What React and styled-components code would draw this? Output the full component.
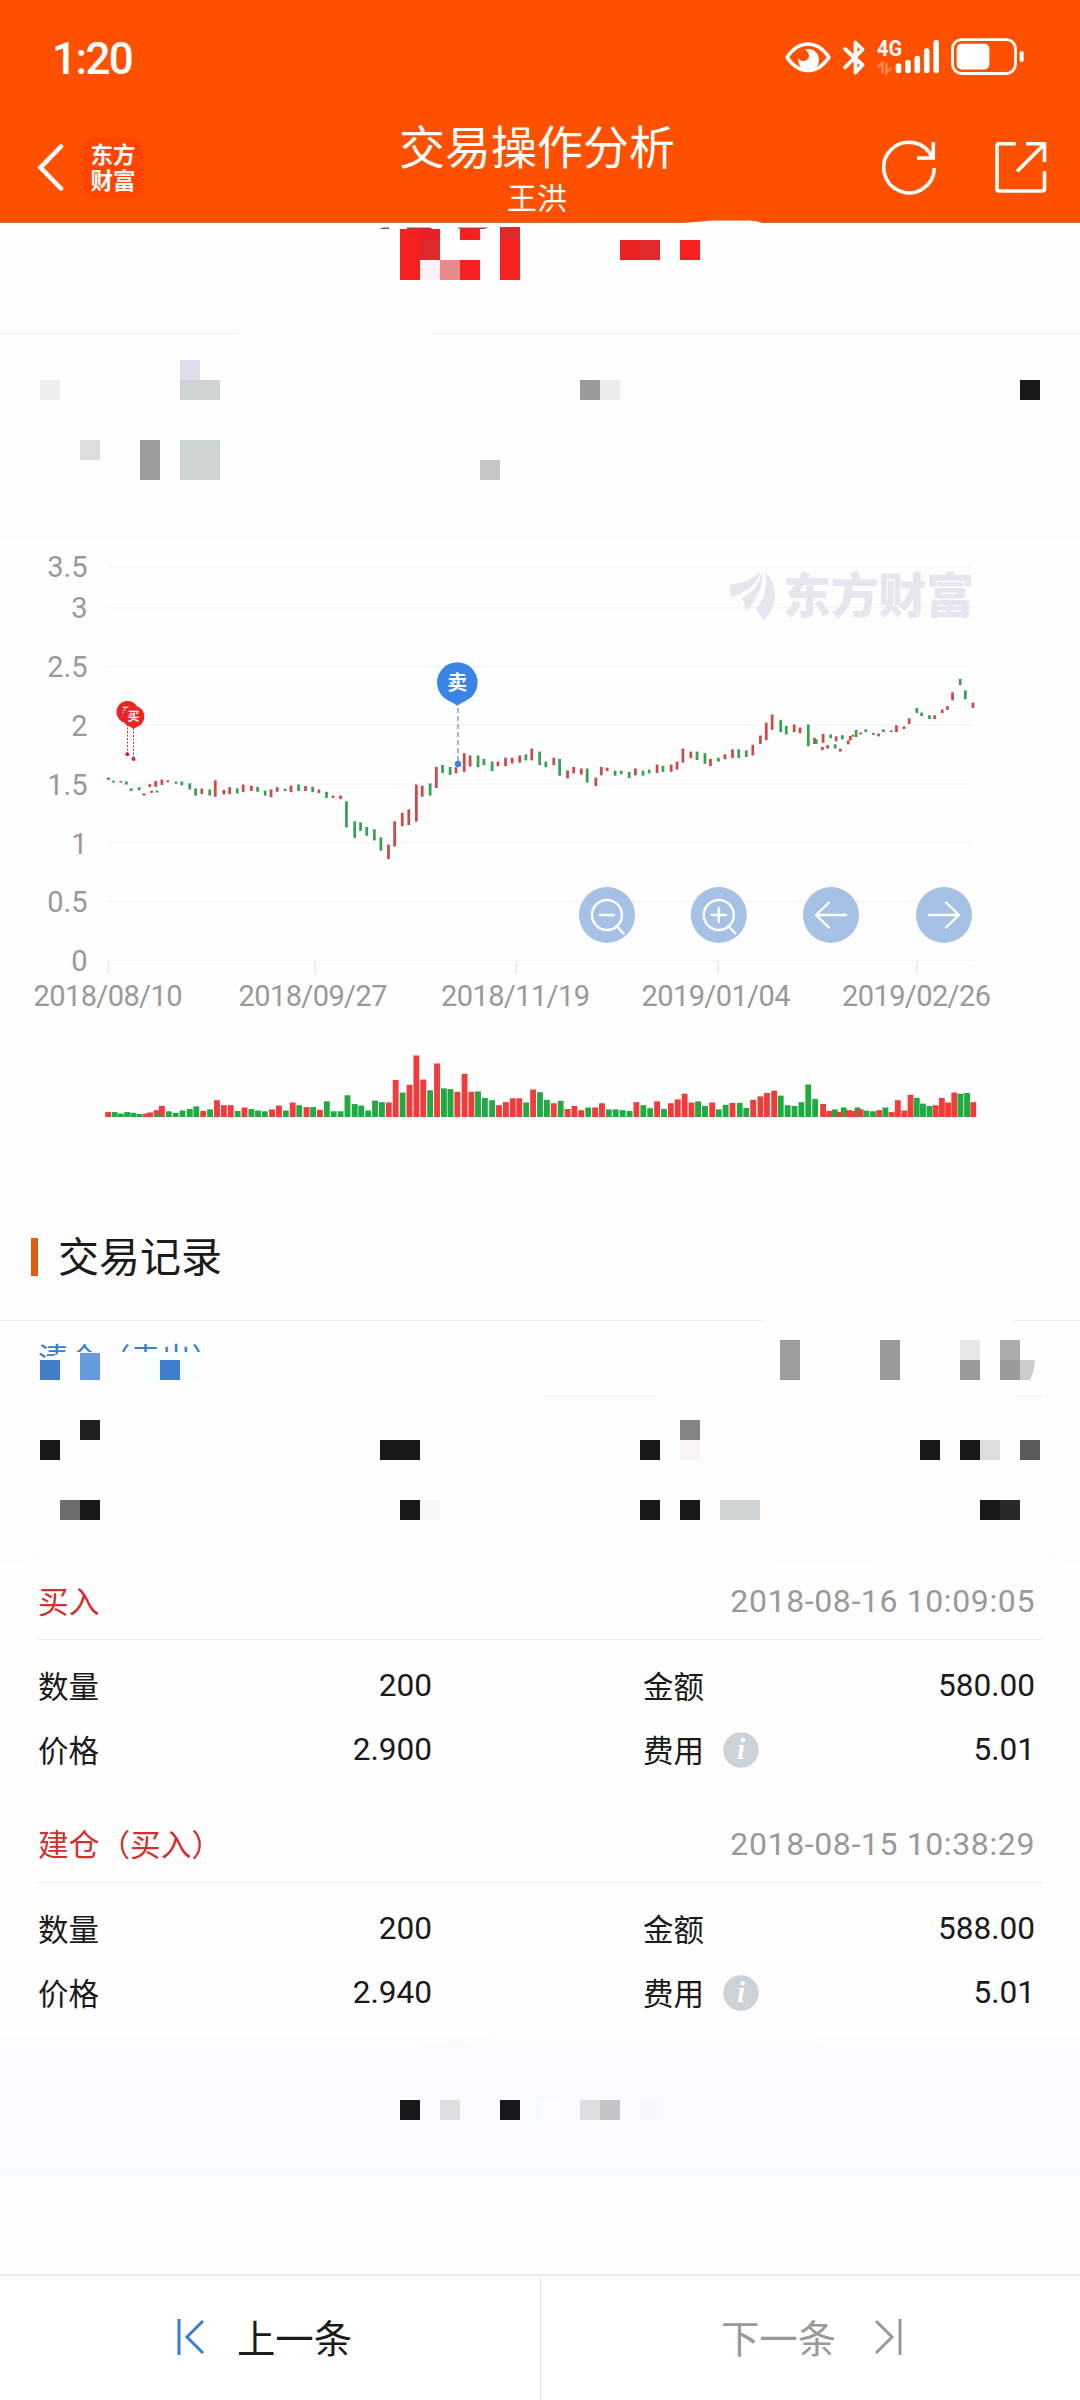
import { createGlobalStyle, styled } from "styled-components";

const GlobalStyle = createGlobalStyle`
    * {
        box-sizing: border-box;
    }
    body {
        margin: 0;
        background: #fefefe;
        font-family: Roboto, 'Noto Sans CJK SC', sans-serif;
        color: #1a1a1a;
    }
`

const Page = styled.div`
    width: 1080px;
    height: 2400px;
    display: flex;
    flex-direction: column;
    overflow: hidden;
`

const Header = styled.header`
    position: relative;
    height: 223px;
    flex-shrink: 0;
    background: #ff5000;
    border-bottom: 1px solid #c87038;
    color: #ffffff;
`

const StatusBar = styled.div`
    height: 112px;
    padding: 2px 51px 0 52px;
    display: flex;
    align-items: center;
    justify-content: space-between;
`

const Clock = styled.span`
    font-size: 44px;
    line-height: 44px;
    font-weight: 500;
    letter-spacing: -1.6px;
    padding-top: 3px;
`

const NavBar = styled.div`
    height: 110px;
    display: grid;
    grid-template-columns: 300px 474px 306px;
`

const NavLeft = styled.div`
    display: flex;
    align-items: center;
    gap: 19px;
    padding: 0 0 0 36px;
`

const Logo = styled.div`
    width: 60px;
    height: 61px;
    border-radius: 13px;
    background: #ff4500;
    display: flex;
    align-items: center;
    justify-content: center;
    padding-bottom: 2px;
    font-family: 'Noto Sans CJK SC', sans-serif;
    font-weight: 700;
    font-size: 22.5px;
    line-height: 26px;
`

const NavTitle = styled.div`
    display: flex;
    flex-direction: column;
    align-items: center;
    font-family: 'Noto Sans CJK SC', sans-serif;
    h1 {
        margin: 4px 0 0;
        font-size: 46px;
        line-height: 56px;
        font-weight: 400;
    }
    span {
        font-size: 30px;
        line-height: 40px;
        margin-top: 4px;
    }
`

const NavRight = styled.div`
    display: flex;
    align-items: center;
    justify-content: flex-end;
    gap: 54px;
    padding-right: 32px;
`

const Panel = styled.section`
    position: relative;
    flex-shrink: 0;
    height: ${props => props.$height}px;
    background: #fefefe;
`

const Overlay = styled.svg`
    position: absolute;
    left: 0;
    top: 0;
    display: block;
`

// the white edge that laps over the header line
const TopArc = styled.svg`
    position: absolute;
    left: 660px;
    top: -4px;
`

const Gap = styled.div`
    position: relative;
    flex-shrink: 0;
    height: ${props => props.$height}px;
    background: #fffbff;
`

const RecordsTitle = styled.h2`
    margin: 0;
    height: 127px;
    flex-shrink: 0;
    display: flex;
    align-items: center;
    gap: 20px;
    padding-left: 31px;
    font-family: 'Noto Sans CJK SC', sans-serif;
    font-size: 41px;
    line-height: 54px;
    font-weight: 400;
    span {
        padding-bottom: 5px;
    }
    &::before {
        content: "";
        width: 7px;
        height: 38px;
        background: #e55a0a;
    }
`

const RecordHead = styled.div`
    margin: 0 38px;
    height: 77px;
    padding: 0 7px 0 0;
    display: flex;
    align-items: center;
    justify-content: space-between;
    border-bottom: 1px solid #eeeeee;
`

const RecordType = styled.span`
    font-family: 'Noto Sans CJK SC', sans-serif;
    font-size: 30.7px;
    line-height: 44px;
    padding-bottom: 3px;
    color: #d0302f;
`

const RecordTime = styled.span`
    color: #999999;
    font-size: 32px;
    line-height: 44px;
    letter-spacing: 0.62px;
`

const RecordRows = styled.div`
    padding: 14px 45px 0 38px;
    display: grid;
    grid-auto-rows: 64px;
`

const RecordLine = styled.div`
    display: grid;
    grid-template-columns: 394px 420px 1fr;
    align-items: center;
`

const Cell = styled.div`
    display: flex;
    align-items: center;
    justify-content: space-between;
`

const RightCell = styled.div`
    display: flex;
    align-items: center;
    gap: 19px;
    padding-left: 211px;
`

const Label = styled.span`
    font-family: 'Noto Sans CJK SC', sans-serif;
    font-size: 30.5px;
    line-height: 44px;
    padding-bottom: 3px;
`

const Value = styled.span`
    font-size: 31.6px;
    line-height: 44px;
    text-align: right;
`

// only the upper edge of the type is left above the mosaic
const MaskedType = styled.span`
    display: block;
    padding: 15px 38px 0;
    font-family: 'Noto Sans CJK SC', sans-serif;
    font-size: 30.7px;
    line-height: 44px;
    color: #3b7dd0;
    clip-path: polygon(0 0, 100% 0, 100% 32px, 62px 32px, 40px 42px, 0 42px);
`

const Notice = styled.div`
    position: relative;
    flex-shrink: 0;
    height: 126px;
    background: #f7fbff;
`

const Footer = styled.footer`
    height: 126px;
    flex-shrink: 0;
    display: grid;
    grid-template-columns: 1fr 1fr;
    border-top: 2px solid #ebebef;
    background: #ffffff;
`

const PageButton = styled.button`
    display: flex;
    align-items: center;
    justify-content: center;
    gap: ${props => props.$gap}px;
    border: none;
    border-left: ${props => (props.$muted ? "1px solid #e9e9ed" : "none")};
    padding: ${props => (props.$muted ? "0 0 0 2px" : "0 11px 0 0")};
    background: none;
    font-family: 'Noto Sans CJK SC', sans-serif;
    font-size: 38.4px;
    color: ${props => (props.$muted ? "#999999" : "#1a1a1a")};
    span {
        padding-bottom: 5px;
    }
    svg {
        margin-bottom: 2px;
    }
`

const RED = "#f23c3c"
const GREEN = "#22aa42"

// colour, x, high, low
const candles = `
r315,621,627 g330,629,634 r351,630,634 g367,631,639 g381,649,656 g404,646,654 r418,662,668 r435,638,646
r440,655,661 g456,655,660 r452,630,645 r470,626,640 r487,628,633 g511,631,637 g528,631,641 g551,636,652
g568,649,668 r586,650,664 g609,652,668 r625,628,671 r650,653,665 r667,646,664 g689,649,662 r706,639,659
r730,642,656 g748,645,658 g770,655,668 r787,652,672 r805,646,658 g828,650,656 r845,642,659 g867,639,656
r887,643,656 g908,645,659 r926,652,661 g948,658,674 r967,668,674 r989,668,677 g1006,683,751 g1030,735,779
g1047,738,760 g1065,750,773 g1087,756,785 g1106,777,812 r1128,796,834 r1146,735,801 r1168,713,748
r1187,704,745 r1209,639,736 r1226,642,671 g1249,636,668 r1267,593,648 g1285,588,609 g1307,593,614
r1324,594,610 r1348,557,606 r1365,563,592 g1388,563,594 g1405,572,588 g1429,579,604 r1446,579,591
r1468,569,591 r1487,569,584 r1509,563,582 g1527,560,576 r1544,545,576 g1567,553,588 g1585,579,594
r1608,569,588 g1625,572,616 r1648,602,623 r1666,593,610 r1688,597,613 g1705,597,634 r1730,621,643
r1746,593,615 r1763,595,604 g1786,603,616 g1804,603,612 g1827,606,622 r1845,597,615 g1867,603,616
g1885,600,610 r1908,587,609 g1925,590,606 r1949,587,606 r1966,579,600 r1983,545,582 r2006,553,570
g2024,553,575 g2047,557,585 r2063,572,591 g2086,569,579 r2105,560,573 r2127,547,570 g2145,547,570
g2167,550,567 r2186,535,563 r2208,511,533 r2225,477,523 r2242,456,496 g2267,471,502 g2283,486,508
r2306,482,502 r2323,490,505 g2347,482,539 r2365,517,533 g2370,521,533 r2390,507,530 r2388,541,549
r2403,536,545 g2412,508,518 r2428,513,526 g2425,534,545 r2440,545,553 g2446,510,521 r2463,524,534
r2469,512,524 r2477,509,514 g2486,496,515 r2499,503,508 g2514,495,502 g2536,504,509 r2551,506,513
g2565,495,502 r2588,498,502 r2603,484,502 r2625,487,494 r2640,466,481 g2662,439,452 g2676,451,460
g2699,458,468 r2714,458,468 r2736,443,452 r2751,434,444 r2766,398,419 g2788,363,379 g2803,393,416
r2825,425,439`

// colour, x, top
const volumes = `
r314,1495 g333,1495 g351,1499 g369,1495 g387,1497 g405,1500 r423,1499 r436,1496 r455,1490 r470,1479
g459,1501 g490,1493 g510,1497 g530,1491 g551,1487 g570,1480 r590,1492 g610,1488 r630,1464 r650,1477
r670,1477 g690,1492 r710,1483 g730,1487 g749,1491 g769,1493 r790,1488 r810,1478 g830,1491 r850,1470
g869,1477 r890,1482 g909,1482 r929,1489 g949,1467 g969,1493 g989,1493 g1009,1451 g1030,1474 g1049,1478
g1069,1491 g1089,1465 g1109,1469 r1129,1470 r1149,1411 g1169,1444 r1189,1424 r1209,1347 r1229,1410
g1249,1438 r1269,1368 g1289,1433 g1308,1435 r1328,1442 r1349,1395 r1369,1442 g1388,1441 g1408,1458
g1429,1464 r1449,1477 r1469,1469 r1489,1459 r1508,1459 g1528,1470 r1548,1436 g1568,1443 g1588,1463
r1608,1472 g1628,1466 r1648,1487 r1668,1479 r1688,1490 g1708,1483 r1728,1483 r1748,1472 g1768,1488
g1788,1488 g1808,1490 g1828,1492 r1848,1469 g1868,1477 g1888,1485 r1908,1467 g1928,1487 r1948,1472
r1968,1462 r1988,1447 r2008,1470 g2027,1467 g2047,1479 r2068,1470 g2087,1488 g2107,1476 r2127,1471
g2148,1471 g2167,1484 r2187,1463 r2208,1454 r2227,1445 r2248,1439 g2267,1452 g2287,1477 g2307,1479
g2327,1469 g2347,1423 g2367,1461 r2390,1474 r2408,1492 g2424,1488 g2450,1483 r2438,1495 g2490,1483
r2465,1490 r2478,1492 r2499,1488 g2516,1491 g2535,1493 r2553,1490 g2571,1483 r2589,1495 r2607,1464
r2626,1491 r2644,1450 g2662,1458 g2680,1473 g2699,1479 r2717,1477 r2735,1458 r2753,1470 r2771,1444
g2789,1447 g2808,1445 r2826,1469`

const parse = (text) =>
    text.trim().split(/\s+/).map((item) => [item[0], ...item.slice(1).split(",").map(Number)])

const yLabels = [["3.5", 577], ["3", 618], ["2.5", 677], ["2", 736], ["1.5", 795], ["1", 854], ["0.5", 912], ["0", 971]]
const xLabels = [["2018/08/10", 108], ["2018/09/27", 313], ["2018/11/19", 515.5], ["2019/01/04", 716], ["2019/02/26", 916.5]]

const Pin = ({ x, y, r, color, size, children }) => (
    <g>
        <circle cx={x} cy={y} r={r} fill={color} />
        <path d={`M${x - r * 0.75} ${y + r * 0.65} L${x} ${y + r * 1.15} L${x + r * 0.75} ${y + r * 0.65} Z`} fill={color} />
        <text x={x} y={y + size * 0.37} fontSize={size} fontWeight="700" textAnchor="middle" fill="#ffffff">{children}</text>
    </g>
)

const RoundButton = ({ x, children }) => (
    <g transform={`translate(${x} 915)`} fill="none" stroke="#ffffff" strokeWidth="2.4" strokeLinecap="round" strokeLinejoin="round">
        <circle r="28" fill="#a5c1e6" stroke="none" />
        {children}
    </g>
)

const Magnifier = ({ plus }) => (
    <>
        <circle r="15" />
        <path d="M9.5 11 L16.500 18.500 M-7 0 H7" />
        {plus && <path d="M0 -7 V7" />}
    </>
)

const Chart = () => (
    <Overlay width="1080" height="629" viewBox="0 539 1080 629" fontFamily="Roboto, 'Noto Sans CJK SC', sans-serif">
        <svg x="0" y="540" width="1080" height="600" viewBox="0 0 3136 1568" preserveAspectRatio="none">
            {[71, 177, 331, 484, 638, 792, 945, 1099].map((y) => (
                <rect key={y} x="315" y={y - 2} width="2510" height="3.5" fill="#f5f5f7" />
            ))}
            {[315, 915, 1499, 2085, 2663].map((x) => (
                <rect key={x} x={x - 3} y="1101" width="6" height="32" fill="#ededef" />
            ))}
        </svg>

        <g fill="#e6e6ef">
            <path d="M730.500 584 C744 584 752 579 760 572 C758 585 746 592 732 597 C729 592 729 588 730.500 584 Z" />
            <path d="M762 571.500 C764 585 756 601 747 611 C744 606 744 602 742 598 C752 594 759 585 762 571.500 Z" />
            <path d="M765 572 C778 583 779 604 764.500 620.500 C760 616 757 612 756 608 C764 600 768 588 765 572 Z" />
            <text x="783" y="613" fontSize="48" fontWeight="900" textLength="191" lengthAdjust="spacing">东方财富</text>
        </g>

        <svg x="0" y="540" width="1080" height="600" viewBox="0 0 3136 1568" preserveAspectRatio="none">
            {parse(candles).map(([c, x, top, bottom]) => (
                <rect key={`${x}-${top}`} x={x - 4} y={top} width="8" height={bottom - top} fill={c === "r" ? "#cd4a4c" : "#36a055"} />
            ))}
            {parse(volumes).map(([c, x, top]) => (
                <rect key={x} x={x - 8.5} y={top} width="17" height={1508 - top} fill={c === "r" ? RED : GREEN} />
            ))}
        </svg>

        <g fontSize="29" fill="#999999">
            {yLabels.map(([text, y]) => (
                <text key={text} x="87.5" y={y} textAnchor="end">{text}</text>
            ))}
            {xLabels.map(([text, x]) => (
                <text key={text} x={x} y="1006" textAnchor="middle" textLength="149" lengthAdjust="spacing">{text}</text>
            ))}
        </g>

        <g stroke="#c03a3a" strokeWidth="1" strokeDasharray="2 1.500">
            <path d="M127.500 724 V753" />
            <path d="M133.500 728 V757" />
        </g>
        <circle cx="127.300" cy="754.300" r="2" fill="#c62c2c" />
        <circle cx="133.500" cy="759" r="2" fill="#c62c2c" />
        <Pin x={127.5} y={712} r={11} color="#ec2524" size={11}>买</Pin>
        <Pin x={133.5} y={716.5} r={10.8} color="#ec2524" size={12}>买</Pin>

        <path d="M458 708 V762" stroke="#7f9fc4" strokeWidth="1.500" strokeDasharray="5 3" />
        <circle cx="458" cy="764" r="3.200" fill="#3a84e6" />
        <Pin x={457.3} y={682.5} r={20.3} color="#3a84e6" size={20}>卖</Pin>

        <RoundButton x={607}><Magnifier /></RoundButton>
        <RoundButton x={718.8}><Magnifier plus /></RoundButton>
        <RoundButton x={831}><path d="M15 0 H-15 M-2 -12.500 L-15 0 L-2 12.500" /></RoundButton>
        <RoundButton x={944}><path d="M-15 0 H15 M2 -12.500 L15 0 L2 12.500" /></RoundButton>
    </Overlay>
)

// x, y, width, height, colour, on a 20px grid in page coordinates
const Mosaic = ({ top, height, cells, children }) => (
    <Overlay width="1080" height={height} viewBox={`0 ${top} 1080 ${height}`}>
        {cells.map(([x, y, w, h, fill]) => (
            <rect key={`${x}-${y}`} x={x} y={y} width={w} height={h} fill={fill} />
        ))}
        {children}
    </Overlay>
)

const nameCells = [
    [400, 229, 20, 51, "#f72020"], [420, 229, 20, 11, "#ea2027"], [420, 240, 20, 20, "#dc2a2a"],
    [420, 260, 20, 20, "#fff2f7"], [440, 260, 20, 20, "#e58b8b"], [460, 229, 20, 11, "#f72020"],
    [460, 260, 20, 20, "#f72020"], [480, 229, 20, 11, "#fefafe"], [500, 227, 20, 13, "#dc2a2a"],
    [500, 240, 20, 40, "#f72323"], [620, 240, 20, 20, "#ec2222"], [640, 240, 20, 20, "#e32a2c"],
    [680, 240, 20, 20, "#f72020"],
    [0, 333, 239, 1, "#eeeeee"], [431, 333, 649, 1, "#eeeeee"],
]

const summaryCells = [
    [40, 380, 20, 20, "#eeeeee"], [180, 360, 20, 20, "#dedee8"], [180, 380, 40, 20, "#cdd2d5"],
    [580, 380, 20, 20, "#9c999d"], [600, 380, 20, 20, "#efeaef"], [1020, 380, 20, 20, "#181818"],
    [80, 440, 20, 20, "#dedbde"], [140, 440, 20, 40, "#9c9c9c"], [180, 440, 40, 40, "#cdd2d5"],
    [480, 460, 20, 20, "#c6c6c6"],
]

const closeCells = [
    [0, 1320, 763, 1, "#eeeeee"], [1014, 1320, 66, 1, "#eeeeee"],
    [140, 1352, 60, 28, "#f7ffff"], [40, 1360, 20, 20, "#417ec7"],
    [80, 1353, 20, 7, "#6e9ad6"], [80, 1360, 20, 20, "#659ade"], [160, 1360, 20, 20, "#3f7dcf"],
    [780, 1340, 20, 40, "#9c9e9c"], [880, 1340, 20, 40, "#9c999c"], [960, 1340, 20, 20, "#e6e6e6"],
    [960, 1360, 20, 20, "#9c999c"], [1000, 1340, 20, 20, "#acaaad"], [1000, 1360, 20, 20, "#9c999c"],
    [544, 1396, 113, 1, "#eeeeee"], [1015, 1396, 27, 1, "#eeeeee"],
    [80, 1420, 20, 20, "#202020"], [40, 1440, 20, 20, "#181818"], [380, 1440, 40, 20, "#181818"],
    [640, 1440, 20, 20, "#181818"], [680, 1420, 20, 20, "#848284"], [680, 1440, 20, 20, "#f7f3f7"],
    [920, 1440, 20, 20, "#181818"], [960, 1440, 20, 20, "#181818"], [980, 1440, 20, 20, "#dedede"],
    [1020, 1440, 20, 20, "#5a5a5a"],
    [60, 1500, 20, 20, "#6b6d6b"], [80, 1500, 20, 20, "#181818"], [400, 1500, 20, 20, "#181818"],
    [420, 1500, 20, 20, "#f7f7f7"], [640, 1500, 20, 20, "#181818"], [680, 1500, 20, 20, "#181818"],
    [720, 1500, 40, 20, "#cdd2d5"], [980, 1500, 20, 20, "#181818"], [1000, 1500, 20, 20, "#292829"],
]

const noticeCells = [
    [400, 2100, 20, 20, "#181818"], [440, 2100, 20, 20, "#dedede"], [500, 2100, 20, 20, "#181818"],
    [540, 2100, 20, 20, "#fffbff"], [580, 2100, 20, 20, "#dedede"], [600, 2100, 20, 20, "#c5c3c5"],
    [640, 2100, 20, 20, "#f7f7fd"],
]

const StatusIcons = () => (
    <svg width="245" height="44" viewBox="784 35 245 44" fill="none" stroke="#ffffff">
        <path d="M787 57.300 C799 39.500 817 39.500 829 57.300 C817 75 799 75 787 57.300 Z" strokeWidth="3.600" strokeLinejoin="round" />
        <path d="M805 49.500 C813 47.500 819 53 819 60 C819 67 813.500 70.500 808 70.500 C802 70.500 797.500 65.500 798.500 58 C800 62 806.500 62 808.500 58 C810 54.500 808 51.500 805 49.500 Z" fill="#ffffff" stroke="none" />
        <path d="M845 49 L862.500 65 L855.500 72.500 V42.500 L862.500 49.500 L845 67.500" strokeWidth="3.800" strokeLinecap="round" strokeLinejoin="round" />
        <text x="877" y="55.700" fontSize="21.500" fontWeight="700" textLength="25" lengthAdjust="spacingAndGlyphs" fill="#ffffff" stroke="none">4G</text>
        <path d="M878 67 L882.500 63 V73 M886.500 63 V73 L891 68" stroke="#ff8a55" strokeWidth="2.400" />
        <g strokeWidth="5.600" strokeLinecap="round">
            <path d="M898.500 66 V70.500" />
            <path d="M908 62.500 V70.500" />
            <path d="M917.300 58.500 V70.500" />
            <path d="M926.700 51 V70.500" />
            <path d="M936.200 42.800 V70.500" />
        </g>
        <rect x="952.500" y="39.700" width="63" height="33.800" rx="9" strokeWidth="2.800" />
        <rect x="956.700" y="43.700" width="32.700" height="25.700" rx="5" fill="#ffffff" stroke="none" />
        <rect x="1019.700" y="51" width="4" height="11" rx="1.800" fill="#ffffff" stroke="none" />
    </svg>
)

const InfoIcon = () => (
    <svg width="36" height="36" viewBox="0 0 36 36">
        <circle cx="18" cy="18" r="17.800" fill="#cdd2d6" />
        <text x="18" y="27" fontFamily="'Liberation Serif', serif" fontSize="29" fontWeight="700" fontStyle="italic" textAnchor="middle" fill="#ffffff">i</text>
    </svg>
)

const Record = ({ type, time, count, price, amount, fee }) => (
    <Panel $height={229}>
        <RecordHead>
            <RecordType>{type}</RecordType>
            <RecordTime>{time}</RecordTime>
        </RecordHead>
        <RecordRows>
            <RecordLine>
                <Cell><Label>数量</Label><Value>{count}</Value></Cell>
                <RightCell><Label>金额</Label></RightCell>
                <Value>{amount}</Value>
            </RecordLine>
            <RecordLine>
                <Cell><Label>价格</Label><Value>{price}</Value></Cell>
                <RightCell><Label>费用</Label><InfoIcon /></RightCell>
                <Value>{fee}</Value>
            </RecordLine>
        </RecordRows>
    </Panel>
)

export default function App() {
    return (
        <Page>
            <GlobalStyle />
            <Header>
                <StatusBar>
                    <Clock>1:20</Clock>
                    <StatusIcons />
                </StatusBar>
                <NavBar>
                    <NavLeft>
                        <svg width="28" height="50" viewBox="0 0 28 50" fill="none" stroke="#ffffff" strokeWidth="4.600" strokeLinecap="round">
                            <path d="M25 4.500 L4.500 25.500 L25 46.500" />
                        </svg>
                        <Logo>东方<br />财富</Logo>
                    </NavLeft>
                    <NavTitle>
                        <h1>交易操作分析</h1>
                        <span>王洪</span>
                    </NavTitle>
                    <NavRight>
                        <svg width="56" height="56" viewBox="882 138 56 56" fill="none" stroke="#ffffff" strokeWidth="3.600">
                            <path d="M934.300 167 A25.300 25.300 0 1 1 932 156" />
                            <path d="M933.300 141 V157 H917" />
                        </svg>
                        <svg width="56" height="56" viewBox="992 139 56 56" fill="none" stroke="#ffffff" strokeWidth="3.600">
                            <path d="M1016 143.800 H999 Q997 143.800 997 146 V189 Q997 191 999 191 H1042 Q1044.500 191 1044.500 189 V171" />
                            <path d="M1026 143.800 H1044.500 V162 M1044 144.500 L1017 171.500" />
                        </svg>
                    </NavRight>
                </NavBar>
            </Header>

            <Panel $height={111}>
                <Mosaic top={223} height={111} cells={nameCells}>
                    <path d="M379 229 L383 227.500 H389 V229 Z" fill="#a04848" />
                    <path d="M407 229 V227.500 H430 L433 229 Z M457 227.500 H489 L484 229 H460 Z" fill="#b8343a" />
                </Mosaic>
                <TopArc width="110" height="6" viewBox="0 0 110 6">
                    <path d="M0 6 L24 4 L52 1.500 H90 Q100 2 107 6 Z" fill="#fefefe" />
                </TopArc>
            </Panel>
            <Panel $height={186}>
                <Mosaic top={334} height={186} cells={summaryCells}>
                    <path d="M572 520 L580 513 H1080 V520 Z" fill="#fffbff" />
                </Mosaic>
            </Panel>
            <Gap $height={19} />
            <Panel $height={629}>
                <Chart />
            </Panel>
            <Gap $height={25} />
            <RecordsTitle><span>交易记录</span></RecordsTitle>
            <Panel $height={230}>
                <MaskedType>清仓（卖出）</MaskedType>
                <Mosaic top={1320} height={230} cells={closeCells}>
                    <path d="M1020 1360 H1035 Q1034 1373 1030 1380 H1020 Z" fill="#cdcbce" />
                </Mosaic>
            </Panel>
            <Gap $height={13}>
                <Overlay width="1080" height="13">
                    <path d="M36 0 Q38 10 43 13 H759 L769 0 Z M874 0 L881 13 H1045 L1054 0 Z" fill="#fefefe" />
                </Overlay>
            </Gap>
            <Record
                type="买入"
                time="2018-08-16 10:09:05"
                count="200"
                price="2.900"
                amount="580.00"
                fee="5.01"
            />
            <Gap $height={14} />
            <Record
                type="建仓（买入）"
                time="2018-08-15 10:38:29"
                count="200"
                price="2.940"
                amount="588.00"
                fee="5.01"
            />
            <Gap $height={13}>
                <Overlay width="1080" height="13">
                    <path d="M410 13 Q450 6 490 5 H810 Q820 6 824 13 Z" fill="#f7fbff" />
                    <path d="M520 0 H800 Q808 2 812 5 H490 Z" fill="#fefefe" />
                </Overlay>
            </Gap>
            <Notice>
                <Mosaic top={2048} height={126} cells={noticeCells} />
            </Notice>
            <Gap $height={100} />
            <Footer>
                <PageButton $gap={32}>
                    <svg width="28" height="36" viewBox="0 0 28 36" fill="none" stroke="#3b7dd0" strokeWidth="3">
                        <path d="M2 0 V36 M26 2 L10 18 L26 34" />
                    </svg>
                    <span>上一条</span>
                </PageButton>
                <PageButton $muted $gap={38}>
                    <span>下一条</span>
                    <svg width="28" height="36" viewBox="0 0 28 36" fill="none" stroke="#999999" strokeWidth="3">
                        <path d="M26 0 V36 M2 2 L18 18 L2 34" />
                    </svg>
                </PageButton>
            </Footer>
        </Page>
    )
}
